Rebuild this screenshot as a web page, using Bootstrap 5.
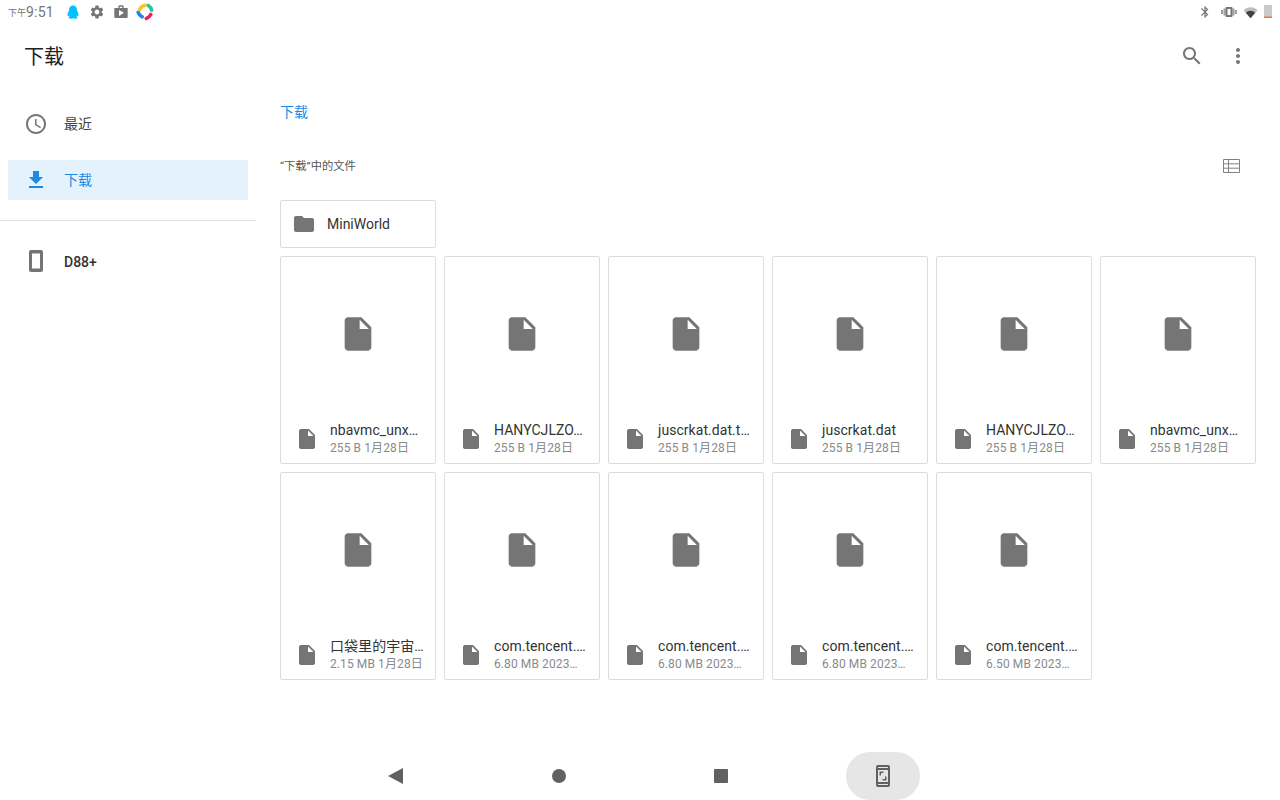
<!DOCTYPE html>
<html lang="zh">
<head>
    <meta charset="UTF-8">
    <meta name="viewport" content="width=device-width, initial-scale=1.0">
    <title>下载</title>
    <link href="https://cdn.jsdelivr.net/npm/bootstrap@5.3.0/dist/css/bootstrap.min.css" rel="stylesheet">
    <style>
        body { width: 1280px; height: 800px; overflow: hidden; background: #fff; color: #212121;
               font-family: Roboto, "Noto Sans CJK SC", sans-serif; }
        svg { display: block; flex: none; fill: #757575; }
        .status-bar { height: 24px; padding: 0 8px; color: #757575; }
        .status-ampm { font-size: 9px; line-height: 24px; padding-top: 2px; }
        .status-time { font-size: 14px; line-height: 24px; width: 28px; letter-spacing: .2px; }
        .status-left { margin-left: 11px; gap: 8px; }
        .status-right { gap: 6px; }
        .status-bt { margin-right: 3px; }
        .status-app { margin-left: -1px; }
        .top-bar { height: 64px; padding: 0 30px 0 24px; }
        .top-title { font-size: 20px; line-height: 28px; padding-top: 1px; }
        .top-actions { gap: 22px; }
        .side-pane { width: 256px; padding-top: 16px; }
        .side-item { height: 40px; margin: 0 8px 16px; padding-left: 16px; gap: 16px; font-size: 14px; border-radius: 2px; color: #424242; }
        .side-item.is-active { background: #e3f2fd; color: #1e88e5; }
        .side-item.is-active svg { fill: #1e88e5; }
        .side-device { font-weight: 500; color: #333; margin-bottom: 0; }
        .side-device span { padding-top: 2px; }
        .side-line { border-top: 1px solid #e0e0e0; margin: 20px 0; }
        .main-pane { padding: 0 24px; }
        .crumb-line { height: 48px; font-size: 14px; line-height: 48px; color: #1e88e5; }
        .section-line { height: 62px; margin-bottom: 2px; font-size: 11.3px; color: #555; }
        .section-line svg { margin: 0 16px 2px 0; }
        .folder-tile { width: 156px; height: 48px; border: 1px solid #dcdcdc; border-radius: 2px; padding-left: 11px; gap: 11px; font-size: 14px; color: #333; margin-bottom: 8px; }
        .file-tile { width: 156px; height: 208px; border: 1px solid #dcdcdc; border-radius: 2px; }
        .file-thumb { height: 154px; }
        .file-meta { padding-left: 14px; gap: 11px; margin-top: 10px; }
        .file-name { font-size: 14px; line-height: 18px; color: #333; letter-spacing: .05px; white-space: nowrap; }
        .file-info { font-size: 12px; line-height: 18px; color: #8a8a8a; letter-spacing: .1px; white-space: nowrap; }
        .nav-bar { height: 48px; }
        .nav-cell { width: 162px; height: 48px; }
        .nav-cell svg { fill: #616161; }
        .nav-back { margin-left: -2px; }
        .rotate-pill { width: 74px; height: 48px; border-radius: 24px; background: #e6e6e6; }
    </style>
</head>
<body class="d-flex flex-column">
    <!-- Status bar -->
    <div class="status-bar d-flex align-items-center justify-content-between">
        <div class="d-flex align-items-center">
            <span class="status-ampm">下午</span><span class="status-time">9:51</span>
            <div class="status-left d-flex align-items-center">
                <svg width="16" height="16" viewBox="0 0 16 16" style="fill:#00c2ff"><path d="M8 1.500c2.600 0 3.900 2 3.900 4.200 0 .6 0 1 .2 1.400.6 1 1.500 2.500 1.500 4 0 1-.6 1.200-1.300.3-.2.6-.5 1-.8 1.400.7.3 1 .6 1 1 0 .6-1.300.9-2.400.9-.8 0-1.500-.2-2.100-.5-.6.3-1.300.5-2.100.5-1.100 0-2.400-.3-2.400-.9 0-.4.3-.7 1-1-.3-.4-.6-.8-.8-1.400-.7.9-1.300.7-1.300-.3 0-1.500.9-3 1.500-4 .2-.4.2-.8.2-1.400C4.100 3.500 5.400 1.500 8 1.500z"/></svg>
                <svg width="16" height="16" viewBox="0 0 24 24"><path d="M19.14,12.94c0.04-0.3,0.06-0.61,0.06-0.94c0-0.32-0.02-0.64-0.07-0.94l2.03-1.58c0.18-0.14,0.23-0.41,0.12-0.61 l-1.92-3.32c-0.12-0.22-0.37-0.29-0.59-0.22l-2.39,0.96c-0.5-0.38-1.03-0.7-1.62-0.94L14.4,2.81c-0.04-0.24-0.24-0.41-0.48-0.41 h-3.84c-0.24,0-0.43,0.17-0.47,0.41L9.25,5.35C8.66,5.59,8.12,5.92,7.63,6.29L5.24,5.33c-0.22-0.08-0.47,0-0.59,0.22L2.74,8.87 C2.62,9.08,2.66,9.34,2.86,9.48l2.03,1.58C4.84,11.36,4.8,11.69,4.8,12s0.02,0.64,0.07,0.94l-2.03,1.58 c-0.18,0.14-0.23,0.41-0.12,0.61l1.92,3.32c0.12,0.22,0.37,0.29,0.59,0.22l2.39-0.96c0.5,0.38,1.03,0.7,1.62,0.94l0.36,2.54 c0.05,0.24,0.24,0.41,0.48,0.41h3.84c0.24,0,0.44-0.17,0.47-0.41l0.36-2.54c0.59-0.24,1.13-0.56,1.62-0.94l2.39,0.96 c0.22,0.08,0.47,0,0.59-0.22l1.92-3.32c0.12-0.22,0.07-0.47-0.12-0.61L19.14,12.94z M12,15.6c-1.98,0-3.6-1.62-3.6-3.6 s1.62-3.6,3.6-3.6s3.6,1.62,3.6,3.6S13.98,15.6,12,15.6z"/></svg>
                <svg width="16" height="16" viewBox="0 0 24 24"><path d="M16 6V4c0-1.110-.89-2-2-2h-4c-1.110 0-2 .89-2 2v2H2v13c0 1.110.89 2 2 2h16c1.110 0 2-.89 2-2V6h-6zm-6-2h4v2h-4V4zM9 18V9l7.500 4L9 18z"/></svg>
                <svg class="status-app" width="18" height="18" viewBox="0 0 18 18" style="fill:none" stroke-width="3.600" stroke-linecap="round">
                    <path d="M3.800 6.500C4.800 4.300 6.800 2.800 9 2.300" stroke="#fbc02d"/>
                    <path d="M12.300 2.500C14 3.600 15.200 5.200 15.600 7.200" stroke="#26c6a0"/>
                    <path d="M14.800 11.500C13.800 13.400 12 14.900 10.300 15.400" stroke="#e91e63"/>
                    <path d="M2.200 9.500C3 11.600 4.400 13 6.200 13.800" stroke="#1e88e5"/>
                </svg>
            </div>
        </div>
        <div class="status-right d-flex align-items-center">
            <svg class="status-bt" width="14" height="14" viewBox="0 0 24 24"><path d="M17.710 7.710L12 2h-1v7.590L6.410 5 5 6.410 10.590 12 5 17.590 6.410 19 11 14.410V22h1l5.710-5.710-4.300-4.290 4.300-4.290zM13 5.830l1.880 1.880L13 9.590V5.830zm1.880 10.460L13 18.170v-3.760l1.880 1.880z"/></svg>
            <svg width="16" height="12" viewBox="0 0 16 12"><rect x="0" y="4" width="2" height="4" style="fill:#9e9e9e"/><rect x="2.500" y="2.500" width="2" height="7" style="fill:#9e9e9e"/><rect x="11.500" y="2.500" width="2" height="7" style="fill:#9e9e9e"/><rect x="14" y="4" width="2" height="4" style="fill:#9e9e9e"/><path fill-rule="evenodd" d="M5.500 1h5a1 1 0 0 1 1 1v8a1 1 0 0 1-1 1h-5a1 1 0 0 1-1-1V2a1 1 0 0 1 1-1zm1 2v6h3V3h-3z"/></svg>
            <svg width="15" height="15" viewBox="0 0 16 16"><path d="M8 14L.5 5.600C2.500 3.700 5.100 2.500 8 2.500s5.500 1.200 7.500 3.100z" style="fill:#bdbdbd"/><path d="M8 14L3 8.300C4.300 7 6.100 6.200 8 6.200s3.700.8 5 2.100z" style="fill:#424242"/></svg>
            <svg width="8" height="16" viewBox="0 0 8 16"><path d="M0 1h8v13H0z" style="fill:#c9c9c9"/><path d="M0 12.500h8V14H0z" style="fill:#ff7043"/></svg>
        </div>
    </div>

    <!-- Toolbar -->
    <div class="top-bar d-flex align-items-center justify-content-between">
        <div class="top-title">下载</div>
        <div class="top-actions d-flex align-items-center">
            <svg width="24" height="24" viewBox="0 0 24 24"><path d="M15.500 14h-.79l-.28-.27C15.410 12.590 16 11.110 16 9.500 16 5.910 13.090 3 9.500 3S3 5.910 3 9.500 5.910 16 9.500 16c1.610 0 3.090-.59 4.230-1.570l.27.28v.79l5 4.990L20.490 19l-4.990-5zm-6 0C7.010 14 5 11.990 5 9.500S7.010 5 9.500 5 14 7.010 14 9.500 11.990 14 9.500 14z"/></svg>
            <svg width="24" height="24" viewBox="0 0 24 24"><path d="M12 8c1.100 0 2-.9 2-2s-.9-2-2-2-2 .9-2 2 .9 2 2 2zm0 2c-1.100 0-2 .9-2 2s.9 2 2 2 2-.9 2-2-.9-2-2-2zm0 6c-1.100 0-2 .9-2 2s.9 2 2 2 2-.9 2-2-.9-2-2-2z"/></svg>
        </div>
    </div>

    <div class="d-flex flex-grow-1">
        <!-- Roots -->
        <div class="side-pane flex-shrink-0">
            <div class="side-item d-flex align-items-center">
                <svg width="24" height="24" viewBox="0 0 24 24"><path d="M11.990 2C6.470 2 2 6.480 2 12s4.470 10 9.990 10C17.520 22 22 17.520 22 12S17.520 2 11.990 2zM12 20c-4.420 0-8-3.580-8-8s3.580-8 8-8 8 3.580 8 8-3.580 8-8 8zm.5-13H11v6l5.250 3.150.75-1.230-4.500-2.670z"/></svg>
                <span>最近</span>
            </div>
            <div class="side-item is-active d-flex align-items-center mb-0">
                <svg width="24" height="24" viewBox="0 0 24 24"><path d="M19 9h-4V3H9v6H5l7 7 7-7zM5 18v2h14v-2H5z"/></svg>
                <span>下载</span>
            </div>
            <div class="side-line"></div>
            <div class="side-item side-device d-flex align-items-center">
                <svg width="24" height="24" viewBox="0 0 24 24"><path fill-rule="evenodd" d="M7 1h10c1.100 0 2 .9 2 2v18c0 1.100-.9 2-2 2H7c-1.100 0-2-.9-2-2V3c0-1.100.9-2 2-2zm1 3.500V19.500h8V4.500H8z"/></svg>
                <span>D88+</span>
            </div>
        </div>

        <!-- Directory -->
        <div class="main-pane flex-grow-1">
            <div class="crumb-line">下载</div>
            <div class="section-line d-flex align-items-center justify-content-between">
                <span>“下载”中的文件</span>
                <svg width="17" height="14" viewBox="0 0 17 14" style="fill:none;stroke:#808080"><path d="M.5.5h16v13H.5zM.5 4.800h16M.5 9.200h16M5.500.5v13"/></svg>
            </div>
            <div class="folder-tile d-flex align-items-center">
                <svg width="24" height="24" viewBox="0 0 24 24"><path d="M10 4H4c-1.100 0-1.990.9-1.990 2L2 18c0 1.100.9 2 2 2h16c1.100 0 2-.9 2-2V8c0-1.100-.9-2-2-2h-8l-2-2z"/></svg>
                <span>MiniWorld</span>
            </div>
            <div id="file-grid" class="d-flex flex-wrap gap-2"></div>
        </div>
    </div>

    <!-- Navigation bar -->
    <div class="nav-bar d-flex justify-content-center">
        <div class="nav-cell d-flex align-items-center justify-content-center"><svg class="nav-back" width="16" height="16" viewBox="0 0 16 16"><path d="M15 0v16L0 8z"/></svg></div>
        <div class="nav-cell d-flex align-items-center justify-content-center"><svg width="14" height="14" viewBox="0 0 14 14"><circle cx="7" cy="7" r="7"/></svg></div>
        <div class="nav-cell d-flex align-items-center justify-content-center"><svg width="14" height="14" viewBox="0 0 14 14"><rect width="14" height="14" rx="1"/></svg></div>
        <div class="nav-cell d-flex align-items-center justify-content-center">
            <div class="rotate-pill d-flex align-items-center justify-content-center">
                <svg width="14" height="22" viewBox="0 0 14 22"><path fill-rule="evenodd" d="M2 0h10a2 2 0 0 1 2 2v18a2 2 0 0 1-2 2H2a2 2 0 0 1-2-2V2a2 2 0 0 1 2-2zm0 2v1h10V2H2zm0 3v12h10V5H2zm0 14v1h10v-1H2z"/><path d="M3.500 6.500h4v1.500h-2.500v2.500H3.500zM10.500 15.500h-4V14h2.500v-2.500h1.500z"/></svg>
            </div>
        </div>
    </div>

    <script>
        // Список файлов
        const files = [
            ['nbavmc_unx…', '255 B 1月28日'],
            ['HANYCJLZO…', '255 B 1月28日'],
            ['juscrkat.dat.t…', '255 B 1月28日'],
            ['juscrkat.dat', '255 B 1月28日'],
            ['HANYCJLZO…', '255 B 1月28日'],
            ['nbavmc_unx…', '255 B 1月28日'],
            ['口袋里的宇宙…', '2.15 MB 1月28日'],
            ['com.tencent.…', '6.80 MB 2023…'],
            ['com.tencent.…', '6.80 MB 2023…'],
            ['com.tencent.…', '6.80 MB 2023…'],
            ['com.tencent.…', '6.50 MB 2023…']
        ];
        const fileIcon = size => `<svg width="${size}" height="${size}" viewBox="0 0 24 24"><path d="M6 2c-1.100 0-1.990.9-1.990 2L4 20c0 1.100.89 2 1.990 2H18c1.100 0 2-.9 2-2V8l-6-6H6zm7 7V3.500L18.500 9H13z"/></svg>`;
        document.getElementById('file-grid').innerHTML = files.map(([name, info]) => `
            <div class="file-tile">
                <div class="file-thumb d-flex align-items-center justify-content-center">${fileIcon(40)}</div>
                <div class="file-meta d-flex align-items-center">
                    ${fileIcon(24)}
                    <div>
                        <div class="file-name">${name}</div>
                        <div class="file-info">${info}</div>
                    </div>
                </div>
            </div>`).join('');
    </script>
    <script src="https://cdn.jsdelivr.net/npm/bootstrap@5.3.0/dist/js/bootstrap.bundle.min.js"></script>
</body>
</html>
